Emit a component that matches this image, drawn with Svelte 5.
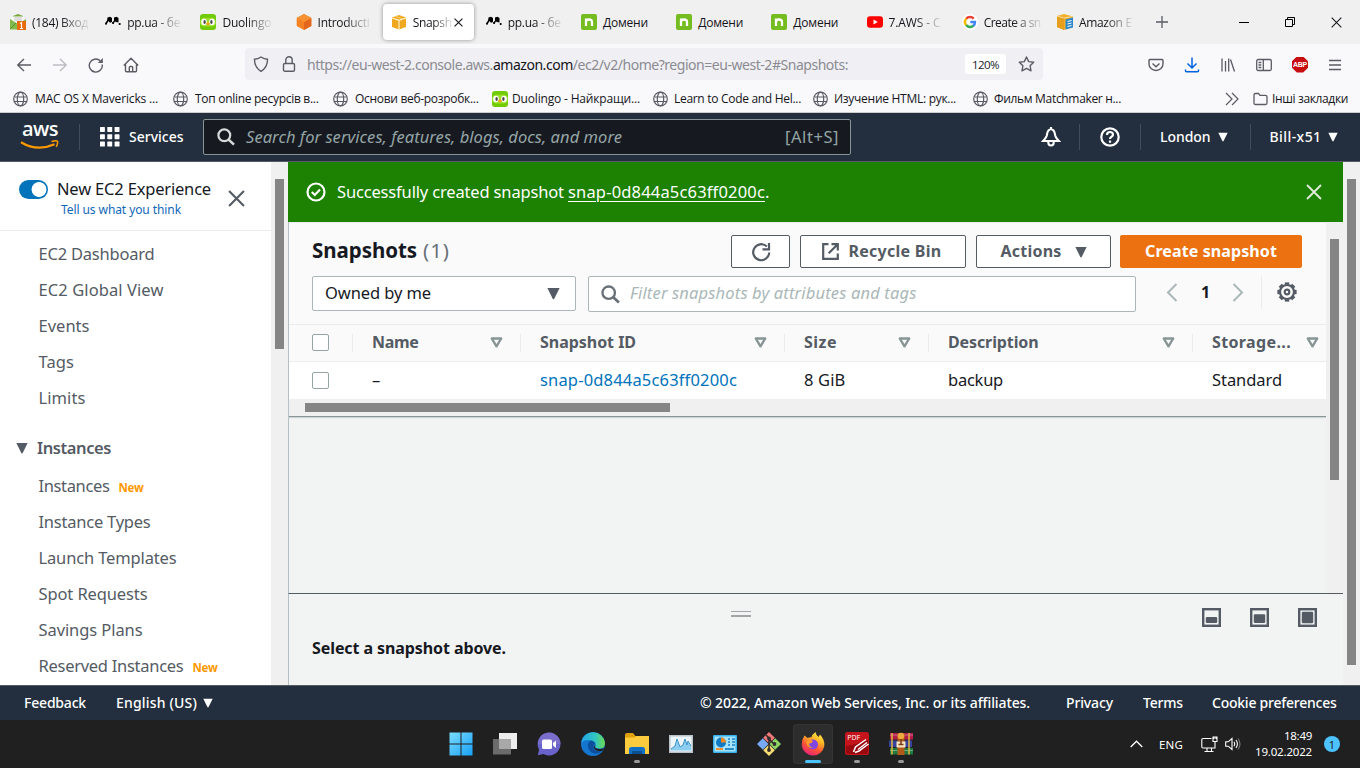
<script>
  // Tracks a label so that it fills the given advance width.
  function fit(node, width) {
    const natural = node.getBoundingClientRect().width;
    node.style.letterSpacing = (width - natural) / node.textContent.length + 'px';
    node.style.width = width + 'px';
  }

  const tabs = [
    { icon: 'mail', text: '(184) Вход', w: 56 },
    { icon: 'pp', text: 'pp.ua - бе', w: 53 },
    { icon: 'duo', text: 'Duolingo', w: 49 },
    { icon: 'cube', text: 'Introducti', w: 52 },
    { icon: 'box', text: 'Snapsh', w: 39, active: true },
    { icon: 'pp', text: 'pp.ua - бе', w: 53 },
    { icon: 'nic', text: 'Домени', w: 45, whole: true },
    { icon: 'nic', text: 'Домени', w: 45, whole: true },
    { icon: 'nic', text: 'Домени', w: 45, whole: true },
    { icon: 'yt', text: '7.AWS - C', w: 52 },
    { icon: 'google', text: 'Create a sn', w: 57 },
    { icon: 'docs', text: 'Amazon E', w: 53 }
  ];
  const bookmarks = [
    { icon: 'globe', text: 'MAC OS X Mavericks ...', w: 123 },
    { icon: 'globe', text: 'Топ online ресурсів в...', w: 123.5 },
    { icon: 'globe', text: 'Основи веб-розробк...', w: 123.5 },
    { icon: 'duo', text: 'Duolingo - Найкращи...', w: 128 },
    { icon: 'globe', text: 'Learn to Code and Hel...', w: 127 },
    { icon: 'globe', text: 'Изучение HTML: рук...', w: 122 },
    { icon: 'globe', text: 'Фильм Matchmaker н...', w: 127 }
  ];
  const navTop = [
    ['EC2 Dashboard', 116], ['EC2 Global View', 125], ['Events', 51], ['Tags', 35.5], ['Limits', 47]
  ];
  const navInstances = [
    ['Instances', 71, true], ['Instance Types', 112], ['Launch Templates', 138], ['Spot Requests', 109],
    ['Savings Plans', 104], ['Reserved Instances', 145, true]
  ];
  const columns = [
    { id: 'name', label: 'Name', w: 46.5, value: '–', vw: 9 },
    { id: 'snap', label: 'Snapshot ID', w: 96, value: 'snap-0d844a5c63ff0200c', vw: 197, link: true },
    { id: 'size', label: 'Size', w: 33, value: '8 GiB', vw: 41.5 },
    { id: 'desc', label: 'Description', w: 90.5, value: 'backup', vw: 55 },
    { id: 'tier', label: 'Storage...', w: 79, value: 'Standard', vw: 70 }
  ];
  const apps = ['start', 'tasks', 'chat', 'edge', 'files', 'perf', 'control', 'git', 'firefox', 'pdf', 'rar'];
  const running = ['files', 'pdf', 'rar'];
</script>

{#snippet caret(size = 10)}
  <svg class="caret" width={size} height={size} viewBox="0 0 10 10"><path d="M.3.8h9.4L5.6 9.1Q5 9.9 4.4 9.1z" fill="currentColor" /></svg>
{/snippet}

{#snippet lens(size)}
  <svg width={size} height={size} viewBox="0 0 18 18" fill="none" stroke="currentColor" stroke-width="2.2"><circle cx="7.3" cy="7.3" r="5.9" /><path d="m11.6 11.6 5.4 5" stroke-width="2.6" /></svg>
{/snippet}

{#snippet cross(size, sw)}
  <svg width={size} height={size} viewBox="0 0 16 16" fill="none" stroke="currentColor" stroke-width={sw}><path d="m1 1 14 14M15 1 1 15" /></svg>
{/snippet}

{#snippet favicon(name)}
  <svg class="fav" width="16" height="16" viewBox="0 0 16 16">
    {#if name === 'mail'}
      <path d="M3 2 8 0l5 2v6H3z" fill="#7aa63c" /><path d="M2.5 2.5h11v7h-11z" fill="#fff" /><path d="M4 4h8M4 6h8" stroke="#bbb" />
      <path d="m0 5 8 5 8-5v10.500H0z" fill="#83b94a" /><path d="m0 15 6-6" stroke="#5b9230" />
      <path d="M7 7h9v9H7z" fill="#e86b0c" /><path d="m10 9.500 1.500-1v6M10 14.500h3" stroke="#fff" fill="none" stroke-width="1.200" />
    {:else if name === 'pp'}
      <path d="M.8 9.700 3 6.500M8 9.500 9.300 7" stroke="#000" stroke-width="1.600" />
      <path d="M2.500 3.500 5 2.800l2 1.200v4L5 8.800 3.500 7H2zM9 3.500l2.500-.7 2 1.200v4.500l-2.500-.5-2-1z" fill="#000" />
      <circle cx="1" cy="9.800" r="1" /><circle cx="8" cy="9" r="1" /><circle cx="14.700" cy="10" r="1.100" />
    {:else if name === 'duo'}
      <rect width="16" height="16" rx="3" fill="#71cb06" /><rect y="3.800" width="16" height="8.800" rx="4.400" fill="#9be22c" />
      <ellipse cx="4" cy="8" rx="2.800" ry="3.300" fill="#fff" /><ellipse cx="12" cy="8" rx="2.800" ry="3.300" fill="#fff" />
      <ellipse cx="4.600" cy="8" rx="1.200" ry="1.900" fill="#4b4b4b" /><ellipse cx="11.400" cy="8" rx="1.200" ry="1.900" fill="#4b4b4b" />
      <path d="m6 9.500 2-1.500 2 1.500-2 2.500z" fill="#f9a01b" />
    {:else if name === 'cube'}
      <path d="M8 0l7.300 4v8L8 16 .7 12V4z" fill="#f58220" /><path d="M8 8l7.300-4v8L8 16z" fill="#e2661c" /><path d="M8 0l7.300 4L8 8 .7 4z" fill="#f89131" />
    {:else if name === 'box'}
      <path d="M1 3.500 8 1l7 2.500v9.500L8 15.500 1 13z" fill="#f0a91f" /><path d="M.5 3.800 8 6.300l7.500-2.500M8 6v10" stroke="#fff3d6" stroke-width="1.100" fill="none" /><path d="M4 2.200l7.500 2.600" stroke="#f8d58c" stroke-width=".8" />
    {:else if name === 'nic'}
      <rect width="16" height="16" rx="2" fill="#74bc1f" /><path d="M5 12V4.500M5 8Q5 5.500 8 5.500T11 8v4" stroke="#fff" stroke-width="2.300" fill="none" />
    {:else if name === 'yt'}
      <rect y="2.300" width="16" height="11.400" rx="3" fill="red" /><path d="M6.500 5.500v5L10.800 8z" fill="#fff" />
    {:else if name === 'google'}
      <circle cx="8" cy="8" r="8" fill="#fff" />
      <g fill="none" stroke-width="2.500"><path d="M4.200 4.800A5 5 0 0 1 11.700 4.600" stroke="#ea4335" /><path d="M4.200 11.200a5 5 0 0 1 0-6.400" stroke="#fbbc05" /><path d="M11.500 11.700a5 5 0 0 1-7.300-.6" stroke="#34a853" /><path d="M8.300 8H13a5 5 0 0 1-1.700 3.800" stroke="#4285f4" /></g>
    {:else if name === 'docs'}
      <path d="M0 2 7 0l9 2.500v10L7 16l-7-3z" fill="#f3ae2b" /><path d="m0 2 7 2v12l-7-3z" fill="#e79e1d" /><path d="m0 2 7 2 9-1.500" stroke="#fbdc9b" fill="none" />
      <path d="m8.500 5.500 7.500-2v10L8.500 15.500z" fill="#2d87c8" /><path d="m10.500 7.500 4-1M10.500 10l4-1M10.500 12.500l4-1" stroke="#fff" />
    {:else if name === 'globe'}
      <g fill="none" stroke="#5b5b66" stroke-width="1.200"><circle cx="7.500" cy="8" r="6.800" /><ellipse cx="7.500" cy="8" rx="3.200" ry="6.800" /><path d="M1 6h13M1 10.500h13" /></g>
    {/if}
  </svg>
{/snippet}

<div class="screen">
  <header class="tabs">
    {#each tabs as tab}
      <div class="tab" class:active={tab.active}>
        {@render favicon(tab.icon)}
        <span class="tabname f" class:fade={!tab.whole} use:fit={tab.w}>{tab.text}</span>
        {#if tab.active}<span class="tabx">{@render cross(9, 2)}</span>{/if}
      </div>
    {/each}
    <svg class="plus" width="12" height="12" viewBox="0 0 12 12"><path d="M6 0v12M0 6h12" stroke="#5b5b66" stroke-width="1.300" /></svg>
    <div class="winctl">
      <svg width="10" height="10"><path d="M0 5.500h10" stroke="#000" /></svg>
      <svg width="10" height="10" fill="none" stroke="#000"><path d="M.5 2.500h7v7h-7zM2.500 2.500v-2h7v7h-2" /></svg>
      {@render cross(11, 1.5)}
    </div>
  </header>

  <nav class="toolbar">
    <div class="navbtns">
      <svg width="16" height="16" viewBox="0 0 16 16" fill="none" stroke="#5b5b66" stroke-width="1.400"><path d="M15 8H2M8 2 1.800 8 8 14" /></svg>
      <svg width="16" height="16" viewBox="0 0 16 16" fill="none" stroke="#bcbcc3" stroke-width="1.400"><path d="M1 8h13M8 2l6.200 6L8 14" /></svg>
      <svg width="16" height="16" viewBox="0 0 16 16" fill="none" stroke="#5b5b66" stroke-width="1.400"><path d="M14.200 7.500A6.500 6.500 0 1 1 12.200 3.800" /><path d="M14.800 1v5H9.800z" fill="#5b5b66" stroke="none" /></svg>
      <svg class="home" width="16" height="16" viewBox="0 0 16 16" fill="none" stroke="#5b5b66" stroke-width="1.400"><path d="M.8 8.500 8 1.300l7.200 7.200M2.500 7.500v6.300q0 1 1 1h9q1 0 1-1V7.500M6.300 14.500v-4q0-1 1-1h1.400q1 0 1 1v4" /></svg>
    </div>
    <div class="urlbar">
      <svg class="shield" width="16" height="16" viewBox="0 0 16 16" fill="none" stroke="#5b5b66" stroke-width="1.400"><path d="M8 1q3 2 6.500 2.200Q14.700 11 8 15.300 1.300 11 1.500 3.200 5 3 8 1z" /></svg>
      <svg class="lock" width="14" height="16" viewBox="0 0 14 16" fill="none" stroke="#5b5b66" stroke-width="1.400"><rect x="1.500" y="7.500" width="11" height="7.700" rx="1.300" /><path d="M3.800 7.500V4a3.200 3.200 0 0 1 6.400 0v3.500" /></svg>
      <span class="url f" use:fit={541}>https://eu-west-2.console.aws.<b>amazon.com</b>/ec2/v2/home?region=eu-west-2#Snapshots:</span>
      <span class="zoom"><span class="f" use:fit={27}>120%</span></span>
      <svg class="star" width="17" height="16" viewBox="0 0 17 16" fill="none" stroke="#5b5b66" stroke-width="1.400"><path d="m8.500 1 2.200 4.600 5 .7-3.600 3.500.9 5-4.500-2.400L4 14.800l.9-5L1.300 6.300l5-.7z" stroke-linejoin="round" /></svg>
    </div>
    <div class="tools">
      <svg width="16" height="16" viewBox="0 0 16 16" fill="none" stroke="#5b5b66" stroke-width="1.400"><path d="M2 2.500h12q1 0 1 1V7A7 6.500 0 0 1 1 7V3.500q0-1 1-1zM4.500 6.500 8 9.700l3.500-3.200" /></svg>
      <svg width="16" height="16" viewBox="0 0 16 16" fill="none" stroke="#0061e0" stroke-width="1.500"><path d="M8 .5V11M3.500 6.500 8 11l4.500-4.500M1.500 12.500v1.300q0 1 1 1h11q1 0 1-1v-1.300" /></svg>
      <svg width="16" height="16" viewBox="0 0 16 16" fill="none" stroke="#5b5b66" stroke-width="1.300"><path d="M2 1.500v13M5.500 4v10.500M8.700 1.500v13M10.500 2.500l4 12" /></svg>
      <svg width="16" height="16" viewBox="0 0 16 16" fill="none" stroke="#5b5b66" stroke-width="1.300"><rect x=".7" y="2.500" width="14.600" height="11" rx="1.500" /><path d="M7.300 2.500v11M2.500 5.500h2.800M2.500 8h2.800M2.500 10.500h2.800" /></svg>
      <span class="abp">ABP</span>
      <svg width="14" height="12" viewBox="0 0 14 12" stroke="#5b5b66" stroke-width="1.300"><path d="M1 1.500h12M1 6h12M1 10.500h12" /></svg>
    </div>
  </nav>

  <div class="bookmarks">
    {#each bookmarks as b}
      <div class="bm">{@render favicon(b.icon)}<span class="f" use:fit={b.w}>{b.text}</span></div>
    {/each}
    <svg class="chev" width="14" height="14" viewBox="0 0 14 14" fill="none" stroke="#5b5b66" stroke-width="1.200"><path d="m1 1 6 6-6 6M7 1l6 6-6 6" /></svg>
    <svg class="folder" width="15" height="14" viewBox="0 0 15 14" fill="none" stroke="#5b5b66" stroke-width="1.300"><path d="M1 3q0-1.500 1.500-1.500h3L7 3.300h5.500q1.500 0 1.500 1.500V11q0 1.500-1.500 1.500h-10Q1 12.500 1 11z" /></svg>
    <span class="f" use:fit={76}>Інші закладки</span>
  </div>

  <div class="awsbar">
    <div class="logo"><span class="f" use:fit={36}>aws</span>
      <svg width="40" height="11" viewBox="0 0 40 11"><path d="M1 2.200Q17 12 34.500 4.300" stroke="#f90" stroke-width="2.200" fill="none" /><path d="M31.500 1.600q5.500-1.500 6 0T36.300 6.800" stroke="#f90" stroke-width="1.600" fill="none" /></svg>
    </div>
    <i class="sep"></i>
    <svg class="grid" width="20" height="20" viewBox="0 0 20 20" fill="#fff">
      {#each [0, 7.3, 14.6] as y}{#each [0, 7.3, 14.6] as x}<rect {x} {y} width="4.900" height="4.900" rx=".6" />{/each}{/each}
    </svg>
    <span class="f services" use:fit={54.5}>Services</span>
    <div class="search">{@render lens(18)}<span class="f" use:fit={376}>Search for services, features, blogs, docs, and more</span><span class="kbd f" use:fit={54}>[Alt+S]</span></div>
    <div class="awsright">
      <svg class="bell" width="20" height="20" viewBox="0 0 20 20" fill="none" stroke="#fff" stroke-width="2.100"><path d="M10 2.300C6.500 2.300 6.300 5.500 5.800 8.500 5.300 11 3.500 12.300 2 14h16c-1.500-1.700-3.300-3-3.800-5.500-.5-3-.7-6.200-4.200-6.200zM10 0v3M7.300 14.500v1a2.700 3 0 0 0 5.400 0v-1" /></svg>
      <i class="sep"></i>
      <svg class="help" width="20" height="20" viewBox="0 0 20 20" fill="none" stroke="#fff" stroke-width="2.200"><circle cx="10" cy="10" r="8.700" /><path d="M7 8q0-3 3-3t3 2.700c0 1.800-3 2.100-3 4.300M10 13.500v2.200" /></svg>
      <i class="sep"></i>
      <span class="f london" use:fit={50.5}>London</span>{@render caret()}
      <i class="sep s3"></i>
      <span class="f user" use:fit={52}>Bill-x51</span>{@render caret()}
    </div>
  </div>

  <div class="body">
    <aside>
      <div class="sidehead">
        <span class="toggle"></span>
        <div class="exp"><span class="f big" use:fit={154}>New EC2 Experience</span><a class="f" use:fit={120} href="#tell">Tell us what you think</a></div>
        <span class="sidex">{@render cross(17, 2)}</span>
      </div>
      <ul class="list">
        {#each navTop as [label, w]}<li><span class="f" use:fit={w}>{label}</span></li>{/each}
      </ul>
      <div class="group">{@render caret(12)}<span class="f" use:fit={74}>Instances</span></div>
      <ul class="list">
        {#each navInstances as [label, w, isNew]}<li><span class="f" use:fit={w}>{label}</span>{#if isNew}<em class="f" use:fit={25}>New</em>{/if}</li>{/each}
      </ul>
    </aside>
    <div class="track side"><i></i></div>

    <main>
      <div class="banner">
        <svg width="20" height="20" viewBox="0 0 20 20" fill="none" stroke="#fff" stroke-width="2.200"><circle cx="10" cy="10" r="8.500" /><path d="m5.800 10 3 3 5.200-5.500" /></svg>
        <span class="f" use:fit={231}>Successfully created snapshot&nbsp;</span><u class="f" use:fit={197}>snap-0d844a5c63ff0200c</u><span class="f">.</span>
        <span class="bx">{@render cross(16, 1.9)}</span>
      </div>
      <div class="upper">
        <section class="panel">
          <div class="heading">
            <h1><span class="f" use:fit={105}>Snapshots</span></h1><span class="count f" use:fit={27}>(1)</span>
            <div class="btns">
              <button class="refresh" aria-label="Refresh"><svg width="20" height="20" viewBox="0 0 20 20" fill="none" stroke="currentColor" stroke-width="2.200"><path d="M18.200 10.500A8 8 0 1 1 15.800 4.500M18 1v6.300h-6.500" /></svg></button>
              <button class="recycle"><svg width="19" height="19" viewBox="0 0 19 19" fill="none" stroke="currentColor" stroke-width="2.200"><path d="M7.500 2.200H2.200v14.600h14.600v-5.300M10.500 2.200h6.300v6.300M16.500 2.500l-8.800 8.800" /></svg><span class="f" use:fit={93}>Recycle Bin</span></button>
              <button class="actions"><span class="f" use:fit={61}>Actions</span>{@render caret(12)}</button>
              <button class="primary"><span class="f" use:fit={132}>Create snapshot</span></button>
            </div>
          </div>
          <div class="filters">
            <div class="select"><span class="f" use:fit={106}>Owned by me</span>{@render caret(13)}</div>
            <div class="filter">{@render lens(19)}<span class="f" use:fit={286.5}>Filter snapshots by attributes and tags</span></div>
            <svg class="prev" width="12" height="19" viewBox="0 0 12 19" fill="none" stroke="#aab7b8" stroke-width="2"><path d="m10.500 1-8.500 8.500 8.500 8.500" /></svg>
            <b class="page">1</b>
            <svg class="next" width="12" height="19" viewBox="0 0 12 19" fill="none" stroke="#aab7b8" stroke-width="2"><path d="m1.500 1 8.500 8.500-8.500 8.500" /></svg>
            <i class="vsep"></i>
            <svg class="gear" width="20" height="20" viewBox="0 0 20 20" fill="none" stroke="#545b64"><circle cx="10" cy="10" r="7" stroke-width="2.200" />{#each [0, 45, 90, 135, 180, 225, 270, 315] as a}<path d="M7.800 1.600h4.400" stroke-width="2.400" transform="rotate({a} 10 10)" />{/each}<circle cx="10" cy="10" r="2.300" stroke-width="2.200" /></svg>
          </div>
          <div class="row head">
            <span class="check"></span>
            {#each columns as c}
              <div class="cell {c.id}"><span class="f" use:fit={c.w}>{c.label}</span><svg width="13" height="11" viewBox="0 0 13 11"><path d="M1.800 1.500h9.400L6.500 9.300z" fill="none" stroke="#879596" stroke-width="2.400" stroke-linejoin="round" /></svg></div>
            {/each}
          </div>
          <div class="row data">
            <span class="check"></span>
            {#each columns as c}
              <div class="cell {c.id}"><span class="f" class:link={c.link} use:fit={c.vw}>{c.value}</span></div>
            {/each}
          </div>
          <div class="hscroll"><i></i></div>
        </section>
        <div class="track inner"><i></i></div>
      </div>
      <section class="split">
        <div class="splitbar">
          <span class="grip"></span>
          <div class="sizes">
            {#each [[9, 6], [6.3, 8.700], [3.800, 11.400]] as [y, h]}
              <svg width="19" height="19" viewBox="0 0 19 19"><rect x="1.200" y="1.200" width="16.600" height="16.600" fill="none" stroke="#545b64" stroke-width="2.400" /><rect x="3.800" {y} width="11.400" height={h} rx="1.200" fill="#545b64" /></svg>
            {/each}
          </div>
        </div>
        <p><span class="f" use:fit={194}>Select a snapshot above.</span></p>
      </section>
    </main>
    <div class="track outer"><i></i></div>
  </div>

  <footer>
    <span class="f" use:fit={62}>Feedback</span>
    <span class="f lang" use:fit={81}>English (US)</span>{@render caret()}
    <span class="f copy" use:fit={330}>© 2022, Amazon Web Services, Inc. or its affiliates.</span>
    <span class="f privacy" use:fit={47}>Privacy</span>
    <span class="f terms" use:fit={40}>Terms</span>
    <span class="f cookie" use:fit={124.500}>Cookie preferences</span>
  </footer>

  <div class="taskbar">
    <div class="apps">
      {#each apps as app}
        <div class="app" class:current={app === 'firefox'} class:running={running.includes(app)}>
          <svg width="24" height="24" viewBox="0 0 24 24">
            {#if app === 'start'}
              <defs><linearGradient id="win" x1="0" y1="0" x2="1" y2="1"><stop stop-color="#7bdcff" /><stop offset="1" stop-color="#18a0f5" /></linearGradient></defs>
              <path d="M.5.500h11v11H.5zM12.500.500h11v11h-11zM.5 12.500h11v11H.5zM12.500 12.500h11v11h-11z" fill="url(#win)" />
            {:else if app === 'tasks'}
              <path d="M6 1h18v16H6z" fill="#eee" /><path d="M0 7h18v15.500H0z" fill="#6b6b6b" /><path d="M6 7h12v10H6z" fill="#a8a8a8" />
            {:else if app === 'chat'}
              <path d="M12 .5a11.500 11.500 0 1 1-5.500 21.600L.8 23.200l1.300-5.500A11.500 11.500 0 0 1 12 .5z" fill="#6a63cc" /><path d="M12 .5A11.500 11.500 0 0 1 23.500 12H1A11.500 11.500 0 0 1 12 .5z" fill="#8377cb" opacity=".6" /><rect x="5" y="7.500" width="10" height="9.500" rx="1.500" fill="#fff" /><path d="m16 11 3-2.500V16l-3-2.500z" fill="#fff" />
            {:else if app === 'edge'}
              <defs><linearGradient id="edge"><stop stop-color="#22a7e8" /><stop offset=".6" stop-color="#32c6c0" /><stop offset="1" stop-color="#6edb4e" /></linearGradient></defs>
              <circle cx="12" cy="12" r="12" fill="#1576cf" /><path d="M.2 10.500A12 12 0 0 1 24 11q0 5.500-5.500 5.500-5 0-4-2.500 1-4-3-5Q5 6.500.2 10.500z" fill="url(#edge)" />
              <path d="M9 9Q4 14 10 20q6 4 12-2-4 2-8 0-4-3 0-6.500Q12 7.500 9 9z" fill="#0b4f9d" /><path d="M14.500 12q-2 2 0 4 4 2 9 0l-1.500 2.500q-5 1.500-8-1-3-3 .5-5.500z" fill="#202020" />
            {:else if app === 'files'}
              <path d="M0 3q0-2 2-2h6l2.500 3H24v18H0z" fill="#e0a008" /><path d="M0 5.500h9L11 4h13v18H0z" fill="#fccb3e" /><path d="M4 22v-4.500Q4 15 6.500 15h11q2.500 0 2.500 2.500V22z" fill="#1271c4" /><path d="M7 19h10v3H7z" fill="#0a4f92" />
            {:else if app === 'perf'}
              <path d="M0 3h24v18H0z" fill="#b7c2ca" /><path d="M1.500 4.500h21v15h-21z" fill="#edf4fa" /><path d="m2 17 4-3 2-7 3 8 3-2 2-6 2 6 1-4 3 5v4.500H2z" fill="#8dcdf0" /><path d="m2 17 4-3 2-7 3 8 3-2 2-6 2 6 1-4 3 5" fill="none" stroke="#3d94c9" />
            {:else if app === 'control'}
              <rect y="3" width="24" height="18" rx="1" fill="#36b2ee" /><path d="M1.500 4.500h21v15h-21z" fill="#a6e3fc" /><circle cx="8" cy="10.500" r="5" fill="#117bc5" /><path d="M8 5.500v5h5a5 5 0 0 0-5-5z" fill="#f58a1e" /><path d="M15 7h2M19 7h3M15 10h2M19 10h3M15 13h2M19 13h3" stroke="#1b83ca" stroke-width="1.500" /><path d="M3 17h7" stroke="#f58a1e" stroke-width="1.800" /><path d="M12 17h9" stroke="#1b83ca" stroke-width="1.800" />
            {:else if app === 'git'}
              <path d="m12 0 5.800 5.800L12 11.500 6.200 5.800z" fill="#f17878" /><path d="m5.800 6.200 5.700 5.800-5.700 5.800L0 12z" fill="#77a9f7" /><path d="m18.200 6.200L24 12l-5.800 5.800L12.500 12z" fill="#8bd568" /><path d="m12 12.500 5.800 5.700L12 24l-5.800-5.800z" fill="#f7dc74" /><path d="M9 3 12 6v12M12 7l5 5" stroke="#332b2b" stroke-width="1.600" fill="none" /><circle cx="12" cy="6.500" r="1.900" fill="#332b2b" /><circle cx="17.500" cy="12" r="1.900" fill="#332b2b" /><circle cx="12" cy="18" r="1.900" fill="#332b2b" />
            {:else if app === 'firefox'}
              <defs><linearGradient id="fx" x1=".8" y1="0" x2=".3" y2="1"><stop stop-color="#fff04a" /><stop offset=".35" stop-color="#ffb327" /><stop offset=".65" stop-color="#ff5534" /><stop offset="1" stop-color="#e8207c" /></linearGradient></defs>
              <path d="M3.500 3.500 6.500 6q2-1 4-.8Q11 2.500 14.500 0q.5 3 3 5l1.500-2.500Q24 8 23.300 14A11.400 11.400 0 0 1 .7 13Q.5 8 3.500 3.500z" fill="url(#fx)" /><circle cx="12" cy="12.500" r="5" fill="#8145e0" /><path d="M5 9.500q4-2.500 7-.5-1 2.500-4 2.500 0 3 4 4-6 1.500-7-6z" fill="#ff9a28" />
            {:else if app === 'pdf'}
              <rect width="24" height="23" rx="2.500" fill="#c4151c" /><path d="M1 14q9-1 22-6v12q0 2-2 2H3q-2 0-2-2z" fill="#98090f" /><text x="2.300" y="7.500" font-size="7" fill="#fff">PDF</text><path d="m8.500 20 2-5L21 7.500M10 20.500l4-1.500 9.500-7M13 17.500l9-7" stroke="#fff" stroke-width="1.500" fill="none" />
            {:else if app === 'rar'}
              <path d="M1 1h23v6.500H1z" fill="#b21c48" /><path d="M0 8.500h23V15H0z" fill="#38429c" /><path d="M1 16h23v6.500H1z" fill="#207a3e" /><path d="M1 3h23M1 18.500h23" stroke="#fff" opacity=".35" /><path d="M3 1v21.500M20 1v21.500" stroke="#e4b641" stroke-width="1.500" /><path d="M8.500 1.500h7V23h-7z" fill="#b35a1a" /><circle cx="12" cy="4" r="3.300" fill="#ecab3b" /><path d="M7.500 9.500h9v6h-9z" fill="#f6e4be" /><path d="M12 7v5M9.500 12.500h5" stroke="#7b3a12" stroke-width="1.500" />
            {/if}
          </svg>
        </div>
      {/each}
    </div>
    <div class="tray">
      <svg width="13" height="8" viewBox="0 0 13 8" fill="none" stroke="#fff" stroke-width="1.300"><path d="M.7 7 6.500 1.200 12.300 7" /></svg>
      <span class="eng"><span class="f" use:fit={24}>ENG</span></span>
      <svg class="net" width="17" height="17" viewBox="0 0 17 17" fill="none" stroke="#fff" stroke-width="1.100"><path d="M10.500 2.500H2q-1.200 0-1.200 1.200v7.100Q.8 12 2 12h12.500M6 12v3.500M10.500 12v3.500M3.500 15.500h9M12 1h4v4.500h-4zM14 5.500V12M13 1v2M15 1v2" /></svg>
      <svg class="vol" width="17" height="14" viewBox="0 0 17 14" fill="none" stroke="#fff" stroke-width="1.100"><path d="M.7 4.800h2.500L7 1.500v11L3.200 9.200H.7zM9 4.800q1.500 2.200 0 4.400M11 3q2.800 4 0 8" /><path d="M13 1.500q4 5.500 0 11" stroke="#777" /></svg>
      <div class="clock"><span class="f" use:fit={28}>18:49</span><span class="f" use:fit={57}>19.02.2022</span></div>
      <span class="badge">1</span>
    </div>
  </div>
</div>

<style>
  :global(body) { margin: 0; overflow: hidden; }
  * { box-sizing: border-box; }
  .screen { width: 1360px; height: 768px; display: flex; flex-direction: column; overflow: hidden; font-family: "Noto Sans", "Open Sans", sans-serif; color: #16191f; }
  svg { flex: none; display: block; }
  .f { display: inline-block; white-space: nowrap; flex: none; }
  .awsbar .f, aside li .f, .group .f, .banner .f, .select .f, .filter .f, .row .f, button .f, footer .f { padding-bottom: 2px; }
  i { display: block; flex: none; }

  .tabs { height: 44px; background: #f0f0f0; display: flex; align-items: center; font: 12px/18px "Open Sans", "Noto Sans", sans-serif; color: #15141a; flex: none; }
  .tab { width: 95.200px; height: 36px; padding-left: 10px; display: flex; align-items: center; gap: 6px; flex: none; }
  .tab.active { width: 91px; margin: 0 2px; padding-left: 8px; background: #fff; border-radius: 4px; box-shadow: 0 0 4px rgba(0, 0, 0, .4); }
  .tabname { padding-top: 1px; }
  .fade { -webkit-mask-image: linear-gradient(90deg, #000 50%, rgba(0, 0, 0, .12) 98%); mask-image: linear-gradient(90deg, #000 50%, rgba(0, 0, 0, .12) 98%); }
  .tabx { margin-left: -4px; }
  .plus { margin-left: 14px; }
  .winctl { margin-left: auto; display: flex; gap: 36px; padding-right: 18px; align-items: center; }

  .toolbar { height: 41px; background: #f9f9fb; display: flex; align-items: center; flex: none; }
  .navbtns { width: 245px; padding-left: 16px; display: flex; gap: 20px; }
  .home { margin-left: -1px; }
  .urlbar { width: 798px; height: 32px; margin-top: -1px; background: #f0f0f4; border-radius: 4px; display: flex; align-items: center; padding-left: 8px; }
  .lock { margin-left: 13px; }
  .url { margin-left: 11px; font-size: 14px; color: #8b8b92; }
  .url b { font-weight: 400; color: #15141a; }
  .zoom { margin-left: auto; width: 41px; height: 20px; display: grid; place-items: center; border-radius: 3px; background: #fff; font: 11.500px "Open Sans", sans-serif; }
  .star { margin: 0 8px 0 12px; }
  .tools { margin-left: auto; padding-right: 18px; display: flex; align-items: center; gap: 20px; }
  .abp { width: 16px; height: 16px; background: #c70d12; display: grid; place-items: center; color: #fff; font: 700 7px/1 "Liberation Sans", sans-serif; letter-spacing: -.2px; clip-path: polygon(30% 0, 70% 0, 100% 30%, 100% 70%, 70% 100%, 30% 100%, 0 70%, 0 30%); }

  .bookmarks { height: 28px; background: #f9f9fb; border-bottom: 1px solid #ccc; display: flex; align-items: center; padding-left: 13px; font: 12px "Open Sans", "Noto Sans", sans-serif; color: #15141a; flex: none; }
  .bm { width: 160px; display: flex; align-items: center; gap: 6px; flex: none; }
  .bm:nth-child(4) { margin-left: -1px; width: 161px; gap: 4px; }
  .bm:nth-child(n+5) { gap: 5px; }
  .chev { margin-left: 92px; }
  .folder { margin: 0 4px 0 14px; }

  .awsbar { height: 49px; background: #232f3e; border-bottom: 1px solid #545b64; display: flex; align-items: center; color: #fff; font-size: 14px; font-weight: 500; flex: none; }
  .logo { width: 79px; padding-left: 20px; display: flex; flex-direction: column; align-items: flex-start; font: 600 20px/17px "Open Sans", sans-serif; }
  .logo .f { margin: -3px 0 0 2px; }
  .logo svg { margin-top: 1px; }
  .sep { width: 1px; height: 26px; background: #414d5c; }
  .grid { margin: 0 9px 0 20px; }
  .search { width: 648px; height: 36px; margin-left: 19.500px; background: #16191f; border: 1px solid #879596; border-radius: 2px; display: flex; align-items: center; padding: 0 11px 0 13px; font-size: 16.500px; font-weight: 400; color: #95a5a6; font-style: italic; }
  .search svg { color: #d5dbdb; margin-right: 11px; }
  .kbd { margin-left: auto; font-style: normal; }
  .awsright { display: flex; align-items: center; margin-left: 189.500px; }
  .bell { margin-right: 18px; }
  .help { margin: 0 20px; }
  .london { margin: 0 7px 0 19.500px; }
  .s3 { margin: 0 19px 0 22px; }
  .user { margin-right: 6px; }

  .body { height: 523px; display: flex; flex: none; }
  aside { width: 271px; background: #fff; color: #545b64; font-size: 16.500px; overflow: hidden; }
  .sidehead { height: 69px; border-bottom: 1px solid #eaeded; display: flex; padding-left: 19px; color: #16191f; }
  .toggle { width: 29px; height: 19px; margin: 18px 9px 0 0; border-radius: 10px; background: radial-gradient(circle at 20px 9.500px, #fff 7px, #0073bb 7.800px); }
  .exp { width: 155px; padding-top: 15px; display: flex; flex-direction: column; align-items: flex-start; }
  .exp .big { line-height: 24px; }
  .exp a { font-size: 12px; line-height: 18px; color: #0f67b8; text-decoration: none; margin-left: 4px; }
  .sidex { margin: 28px 0 0 16px; color: #545b64; }
  .list { list-style: none; margin: 0; padding: 5px 0 0 38.500px; }
  .list li { height: 36px; display: flex; align-items: center; gap: 9px; }
  .group { height: 36px; margin-top: 14px; display: flex; align-items: center; gap: 9px; padding-left: 16px; font-weight: 600; }
  .group + .list { padding-top: 2px; }
  .list li em.f { font: 700 11.500px "Noto Sans", sans-serif; color: #ff9900; padding: 2px 0 0; }
  .track { width: 17px; background: #f0f0f0; flex: none; }
  .track i { width: 9px; margin-left: 4px; background: #858585; }
  .side i { margin-top: 17px; height: 170px; }
  .outer i { margin-top: 17px; height: 486px; }
  .inner i { margin-top: 17px; height: 241px; }

  main { width: 1055px; background: #f2f3f3; display: flex; flex-direction: column; }
  .banner { height: 60px; background: #1d8102; color: #fff; display: flex; align-items: center; padding-left: 18px; font-size: 16.500px; flex: none; }
  .banner svg { margin-right: 11px; }
  .banner u { text-underline-offset: 3px; }
  .bx { margin-left: auto; padding-right: 10px; opacity: .85; }
  .upper { height: 371px; display: flex; }
  .panel { width: 1038px; border-left: 1px solid #b5c0c4; }
  .heading { height: 54px; padding: 12px 24px 8px 23px; display: flex; align-items: flex-start; background: #fafafa; border-top: 1px solid #eaeded; }
  h1 { margin: 2px 0 0; font-size: 20.500px; line-height: 26px; font-weight: 700; }
  h1 .f { display: block; width: max-content; }
  .count { margin: 2px 0 0 6px; font-size: 20.500px; line-height: 26px; color: #687078; }
  .btns { margin-left: auto; display: flex; }
  button { height: 33px; border: 1px solid #545b64; border-radius: 2px; background: #fff; color: #545b64; display: flex; align-items: center; justify-content: center; font: 700 16px "Noto Sans", sans-serif; padding: 0; }
  .refresh { width: 59px; }
  .recycle { width: 166px; margin-left: 10px; gap: 9px; padding-right: 4px; }
  .actions { width: 135px; margin: 0 9px 0 10px; gap: 13px; }
  .primary { width: 182px; background: #ec7211; border-color: #ec7211; color: #fff; }
  .filters { height: 48px; background: #fafafa; display: flex; padding-left: 23px; font-size: 16.500px; }
  .select { width: 264px; height: 35px; border: 1px solid #aab7b8; border-radius: 2px; background: #fff; display: flex; align-items: center; justify-content: space-between; padding: 0 15px 0 12px; }
  .select .caret, .actions .caret, .group .caret { color: #545b64; }
  .filter { width: 548px; height: 36px; margin-left: 12px; border: 1px solid #aab7b8; border-radius: 2px; background: #fff; display: flex; align-items: center; gap: 10px; padding-left: 12px; color: #aab7b8; font-style: italic; }
  .filter .f { padding-bottom: 3px; }
  .filter svg { color: #687078; }
  .prev { margin: 7px 0 0 30px; }
  .page { margin: 5px 0 0 23px; width: 11px; line-height: 22px; font-size: 16px; }
  .next { margin: 7px 0 0 20px; }
  .vsep { width: 1px; height: 33px; background: #eaeded; margin-left: 17px; }
  .gear { margin: 6px 0 0 15px; }
  .row { display: flex; align-items: center; padding-left: 23px; border-top: 1px solid #eaeded; overflow: hidden; font-size: 16.500px; background: #fff; }
  .head { height: 37px; background: #fafafa; color: #545b64; font-weight: 700; font-size: 16px; }
  .data { height: 38px; }
  .check { width: 17px; height: 17px; border: 1px solid #95a5a6; border-radius: 2px; background: #fff; margin-right: 23px; flex: none; }
  .head .check { margin-top: -1px; }
  .cell { height: 18px; display: flex; align-items: center; justify-content: space-between; padding: 0 17px 0 19px; flex: none; border-left: 1px solid transparent; }
  .cell svg { margin-top: -1px; }
  .head .cell { border-color: #eaeded; }
  .name { width: 168px; }
  .snap { width: 264px; }
  .size { width: 144px; }
  .desc { width: 264px; }
  .tier { width: 144px; }
  .link { color: #0073bb; }
  .hscroll { height: 18px; background: #f0f0f0; border-bottom: 1px solid #879596; padding: 4px 0 0 16px; box-shadow: 0 1px 1px #cfd5d6; }
  .hscroll i { width: 365px; height: 9px; background: #858585; }
  .split { flex: 1; border-top: 1px solid #545b64; border-left: 1px solid #b5c0c4; }
  .splitbar { height: 42px; display: flex; padding: 14px 26px 0 442px; justify-content: space-between; }
  .grip { width: 20px; height: 6px; margin-top: 3px; border: solid #a2a5a7; border-width: 1px 0 2px; }
  .sizes { display: flex; gap: 29px; }
  p { margin: 0 0 0 23px; font-size: 16px; line-height: 24px; font-weight: 700; }

  footer { height: 35px; background: #232f3e; border-top: 1px solid #545b64; display: flex; align-items: center; color: #fff; font-size: 14px; font-weight: 500; padding-left: 24px; flex: none; }
  .lang { margin: 0 6px 0 30px; }
  .copy { margin-left: 487px; }
  .privacy { margin-left: 36px; }
  .terms { margin-left: 30px; }
  .cookie { margin-left: 29px; }

  .taskbar { height: 48px; background: #202020; display: flex; align-items: center; color: #fff; flex: none; }
  .apps { display: flex; margin-left: 441px; gap: 4px; }
  .app { width: 40px; height: 40px; border-radius: 4px; display: grid; place-items: center; position: relative; }
  .current { background: #2d2d2d; box-shadow: inset 0 0 0 1px #343434; }
  .current::after, .running::after { content: ""; position: absolute; bottom: 1px; left: 12px; width: 16px; height: 3px; border-radius: 2px; background: #4cc2ff; }
  .running::after { left: 17px; width: 6px; background: #999; }
  .app text { font-family: "Open Sans", sans-serif; }
  .tray { margin-left: auto; display: flex; align-items: center; font-size: 11.500px; padding-right: 20px; }
  .eng { margin: 0 18px 0 16px; }
  .vol { margin-left: 7px; }
  .clock { width: 70px; display: flex; flex-direction: column; align-items: flex-end; line-height: 16px; }
  .badge { width: 16px; height: 16px; margin-left: 12px; border-radius: 50%; background: #4cc2ff; color: #202020; display: grid; place-items: center; font-size: 11px; line-height: 1; }
</style>
